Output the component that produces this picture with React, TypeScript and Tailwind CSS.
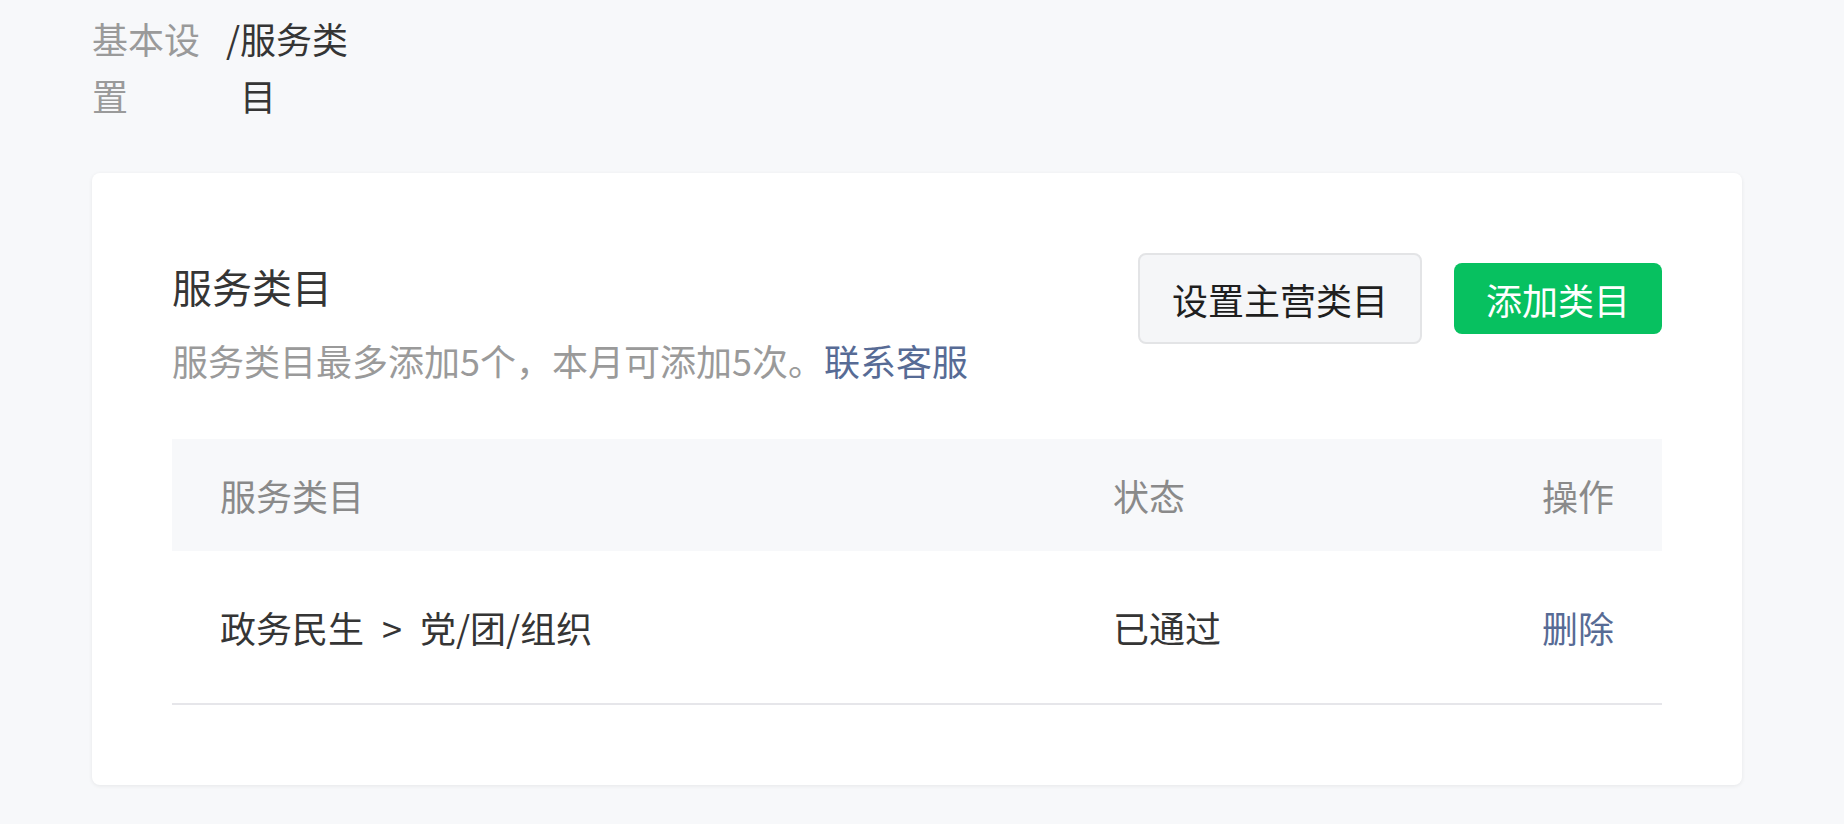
import React from "react";

const FONT = { fontFamily: '"Noto Sans CJK SC", "Noto Sans", sans-serif' };

export default function App() {
  return (
    <div className="min-h-screen w-full bg-[#f7f8fa]" style={FONT}>
      {/* Breadcrumb */}
      <div className="flex items-start pl-[92px] pt-[10px] text-[36px] leading-[57px]">
        <div className="w-[134px] text-[#9a9a9a]">基本设置</div>
        <div className="w-[14px] text-center text-[#353535]">/</div>
        <div className="w-[112px] text-[#353535]">服务类目</div>
      </div>

      {/* Card */}
      <div className="ml-[92px] mt-[49px] w-[1650px] rounded-[8px] bg-white p-[80px] shadow-[0_1px_4px_rgba(0,0,0,0.07)]">
        <div className="flex items-start justify-between">
          <div className="pt-[5px]">
            <div className="text-[40px] leading-[56px] text-[#353535]">服务类目</div>
            <div className="mt-[18px] text-[36px] leading-[56px] text-[#9a9a9a]">
              服务类目最多添加5个，本月可添加5次。
              <span className="text-[#576b95]">联系客服</span>
            </div>
          </div>
          <div className="flex items-center gap-[32px]">
            <button className="h-[91px] w-[284px] rounded-[8px] border-2 border-[#e3e4e6] bg-[#f5f6f8] text-[36px] text-[#1f1f1f]">
              设置主营类目
            </button>
            <button className="h-[71px] w-[208px] rounded-[8px] bg-[#07c160] text-[36px] text-white">
              添加类目
            </button>
          </div>
        </div>

        {/* Table */}
        <div className="mt-[51px]">
          <div className="grid h-[112px] grid-cols-[941px_1fr_auto] items-center bg-[#f7f8fa] text-[36px] text-[#8a8a8a]">
            <div className="pl-[48px]">服务类目</div>
            <div>状态</div>
            <div className="pr-[48px] text-right">操作</div>
          </div>
          <div className="grid h-[154px] grid-cols-[941px_1fr_auto] items-center border-b-2 border-[#e6e6ea] text-[36px] text-[#353535]">
            <div className="flex items-center pl-[48px]">
              <span>政务民生</span>
              <span className="mx-[18px]">&gt;</span>
              <span>党/团/组织</span>
            </div>
            <div>已通过</div>
            <div className="pr-[48px] text-right text-[#576b95]">删除</div>
          </div>
        </div>
      </div>
    </div>
  );
}
